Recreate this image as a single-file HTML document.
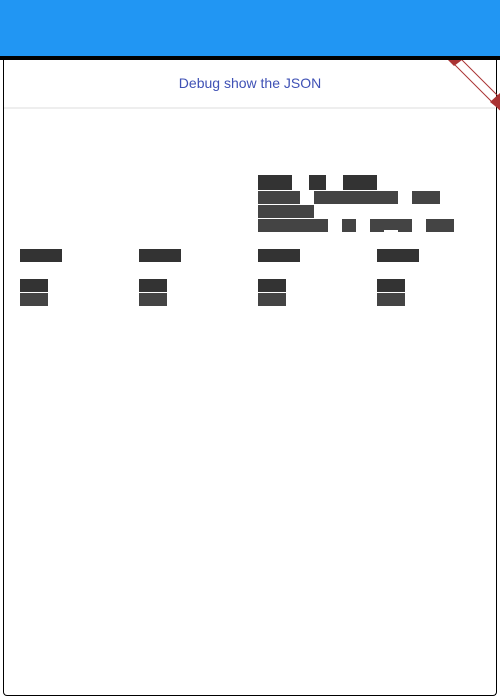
<!DOCTYPE html><html><head><style>
body{margin:0;width:500px;height:700px;background:#fff;position:relative;overflow:hidden;font-family:"Liberation Sans",sans-serif}
.b{position:absolute}
.d{background:#333;position:absolute}.l{background:#444;position:absolute}
</style></head><body>
<div class="b" style="left:0;top:0;width:500px;height:56px;background:#2196f3"></div>
<div class="b" style="left:0;top:56px;width:500px;height:4px;background:#000"></div>
<div class="b" style="left:3px;top:60px;width:492px;height:635px;border:1px solid #000;border-top:none;border-radius:0 0 4px 4px"></div>
<div class="b" style="left:4px;top:60px;width:491px;height:47px;border-bottom:2px solid #eee"></div>
<div class="b" style="left:0;top:75px;width:500px;text-align:center;font-size:14px;color:#3f51b5">Debug show the JSON</div>
<svg class="b" style="left:440px;top:60px" width="60" height="52"><line x1="10" y1="0" x2="60" y2="50" stroke="#a33" stroke-width="1"/><line x1="22" y1="0" x2="60" y2="38" stroke="#a33" stroke-width="1"/><polygon points="8,0 22,0 14,6" fill="#a33"/><polygon points="60,33 60,50 50,42" fill="#a33"/></svg>
<div class="d" style="left:258px;top:175px;width:34px;height:15px"></div>
<div class="d" style="left:309px;top:175px;width:17px;height:15px"></div>
<div class="d" style="left:343px;top:175px;width:34px;height:15px"></div>
<div class="l" style="left:258px;top:191px;width:42px;height:13px"></div>
<div class="l" style="left:314px;top:191px;width:84px;height:13px"></div>
<div class="l" style="left:412px;top:191px;width:28px;height:13px"></div>
<div class="l" style="left:258px;top:205px;width:56px;height:13px"></div>
<div class="l" style="left:258px;top:219px;width:70px;height:13px"></div>
<div class="l" style="left:342px;top:219px;width:14px;height:13px"></div>
<div class="l" style="left:370px;top:219px;width:14px;height:13px"></div>
<div class="l" style="left:384px;top:219px;width:14px;height:11px"></div>
<div class="l" style="left:398px;top:219px;width:14px;height:13px"></div>
<div class="l" style="left:426px;top:219px;width:28px;height:13px"></div>
<div class="d" style="left:20px;top:249px;width:42px;height:13px"></div>
<div class="d" style="left:139px;top:249px;width:42px;height:13px"></div>
<div class="d" style="left:258px;top:249px;width:42px;height:13px"></div>
<div class="d" style="left:377px;top:249px;width:42px;height:13px"></div>
<div class="d" style="left:20px;top:279px;width:28px;height:13px"></div>
<div class="d" style="left:139px;top:279px;width:28px;height:13px"></div>
<div class="d" style="left:258px;top:279px;width:28px;height:13px"></div>
<div class="d" style="left:377px;top:279px;width:28px;height:13px"></div>
<div class="l" style="left:20px;top:293px;width:28px;height:13px"></div>
<div class="l" style="left:139px;top:293px;width:28px;height:13px"></div>
<div class="l" style="left:258px;top:293px;width:28px;height:13px"></div>
<div class="l" style="left:377px;top:293px;width:28px;height:13px"></div>
</body></html>
